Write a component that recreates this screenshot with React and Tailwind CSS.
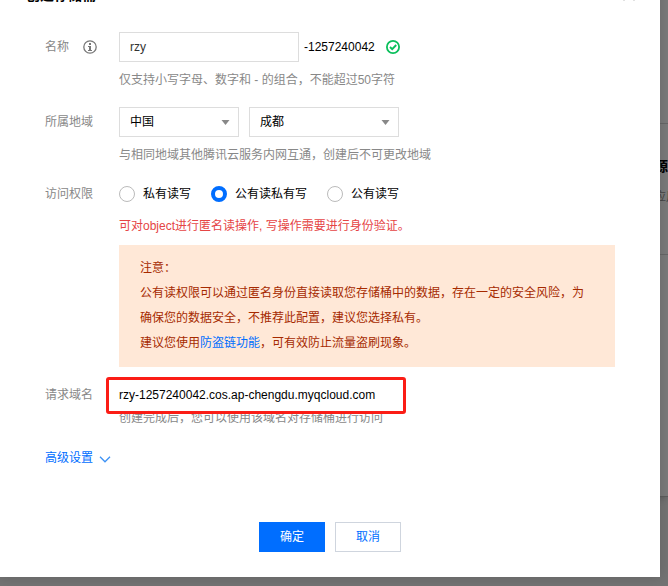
import React, { useState } from 'react';

const regionOptions = ['中国', '亚太', '欧洲', '北美'];
const cityOptions = ['成都', '北京', '上海', '广州'];

const permissions = [
  { value: 'private', label: '私有读写' },
  { value: 'public-read', label: '公有读私有写' },
  { value: 'public', label: '公有读写' },
];

const InfoIcon = () => (
  <svg className="w-3.5 h-3.5 shrink-0" viewBox="0 0 14 14" fill="none" aria-hidden="true">
    <circle cx="7" cy="7" r="6.2" stroke="#777" strokeWidth="1.3" />
    <rect x="6" y="3" width="2" height="2" fill="#777" />
    <path d="M5 6h3v4h1v1H5v-1h1V7H5z" fill="#777" />
  </svg>
);

const SuccessIcon = () => (
  <svg className="w-3.5 h-3.5 shrink-0" viewBox="0 0 14 14" fill="none" aria-hidden="true">
    <circle cx="7" cy="7" r="6.1" stroke="#0abf5b" strokeWidth="1.8" />
    <path d="M4 7l2.2 2.2L10.2 5" stroke="#0abf5b" strokeWidth="1.9" />
  </svg>
);

const FormRow = ({ label, htmlFor, icon, children }) => (
  <div className="flex">
    <div className="flex h-[30px] w-[74px] shrink-0 items-center gap-3.5 text-[#888]">
      <label htmlFor={htmlFor}>{label}</label>
      {icon}
    </div>
    <div className="min-w-0 flex-1">{children}</div>
  </div>
);

const SelectBox = ({ id, label, options, value, onChange, className }) => (
  <div className={`relative h-[30px] ${className}`}>
    <select
      id={id}
      aria-label={label}
      value={value}
      onChange={(e) => onChange(e.target.value)}
      className="h-full w-full appearance-none border border-[#ddd] bg-white px-2.5 text-black outline-none"
    >
      {options.map((option) => (
        <option key={option}>{option}</option>
      ))}
    </select>
    <svg className="pointer-events-none absolute right-[9px] top-[13px] h-[5px] w-[9px]" viewBox="0 0 9 5" aria-hidden="true">
      <path d="M0.5 0h8L4.5 5z" fill="#888" />
    </svg>
  </div>
);

const App = () => {
  const [name, setName] = useState('rzy');
  const [region, setRegion] = useState('中国');
  const [city, setCity] = useState('成都');
  const [permission, setPermission] = useState('public-read');

  return (
    <div className="relative min-h-screen overflow-hidden bg-[#737373] pr-2 pb-[9px] font-['Liberation_Sans','Noto_Sans_CJK_SC',sans-serif] text-xs leading-[18px]">
      {/* Dimmed page behind the dialog */}
      <div className="absolute right-0 top-0 h-[497px] w-3.5 overflow-hidden border-b border-[#5c5c5c] bg-[#7a7a7a] shadow-md">
        <div className="h-[124px] border-b border-[#666]" />
        <div className="h-[131px] whitespace-nowrap border-b border-[#666] pt-8">
          <p className="text-sm font-bold leading-5 text-black">源</p>
          <p className="mt-3 text-[#444]">应用</p>
        </div>
      </div>

      <div role="dialog" aria-labelledby="dialog-title" className="relative bg-white pb-[25px] shadow-[0_0_12px_rgba(0,0,0,0.15)]">
        <div className="-mt-[15px] flex h-5 items-center justify-between pl-[26px] pr-[25px]">
          <h3 id="dialog-title" className="text-sm font-bold leading-5 text-black">创建存储桶</h3>
          <button type="button" aria-label="关闭" className="h-3 w-3">
            <svg viewBox="0 0 12 12" fill="none" stroke="#888" aria-hidden="true">
              <path d="M1 0.5l10 11M11 0.5l-10 11" />
            </svg>
          </button>
        </div>

        <form className="px-[45px] pt-[27px]" onSubmit={(e) => e.preventDefault()}>
          <FormRow label="名称" htmlFor="bucket-name" icon={<InfoIcon />}>
            <div className="flex items-center">
              <input
                id="bucket-name"
                type="text"
                value={name}
                onChange={(e) => setName(e.target.value)}
                className="h-[30px] w-[180px] border border-[#ddd] bg-white px-2.5 text-[#333] outline-none"
              />
              <span className="ml-[5px] mr-[11px] text-black">-1257240042</span>
              <SuccessIcon />
            </div>
            <p className="mt-[9px] text-[#888]">仅支持小写字母、数字和 - 的组合，不能超过50字符</p>
          </FormRow>

          <div className="mt-[18px]">
            <FormRow label="所属地域" htmlFor="region">
              <div className="flex gap-2.5">
                <SelectBox id="region" label="所属地域" options={regionOptions} value={region} onChange={setRegion} className="w-[120px]" />
                <SelectBox id="city" label="城市" options={cityOptions} value={city} onChange={setCity} className="w-[150px]" />
              </div>
              <p className="mt-[9px] text-[#888]">与相同地域其他腾讯云服务内网互通，创建后不可更改地域</p>
            </FormRow>
          </div>

          <div className="mt-[15px]">
            <FormRow label="访问权限" htmlFor="private">
              <div className="flex h-[30px] items-center gap-5">
                {permissions.map((item) => (
                  <label key={item.value} className="flex items-center gap-2 text-black">
                    <input
                      id={item.value}
                      type="radio"
                      name="permission"
                      checked={permission === item.value}
                      onChange={() => setPermission(item.value)}
                      className="h-4 w-4 appearance-none rounded-full border border-[#bbb] bg-white checked:border-4 checked:border-[#006eff]"
                    />
                    {item.label}
                  </label>
                ))}
              </div>
              <p className="mt-2 text-[#e54545]">可对object进行匿名读操作, 写操作需要进行身份验证。</p>
              <div className="mt-2.5 bg-[#ffe8d7] px-[21px] py-[11px] leading-[25px] text-[#a62a00]">
                <p>注意：</p>
                <p>公有读权限可以通过匿名身份直接读取您存储桶中的数据，存在一定的安全风险，为确保您的数据安全，不推荐此配置，建议您选择私有。</p>
                <p>
                  建议您使用<a href="#referer" className="text-[#006eff]">防盗链功能</a>，可有效防止流量盗刷现象。
                </p>
              </div>
            </FormRow>
          </div>

          <div className="mt-[13px]">
            <FormRow label="请求域名" htmlFor="domain">
              <div className="relative flex h-[30px] items-center">
                <output id="domain" className="text-black">{name}-1257240042.cos.ap-chengdu.myqcloud.com</output>
                <div className="absolute -left-[13px] -top-[3px] z-10 h-[37px] w-[300px] rounded-[3px] border-3 border-[#fb1d16]" />
              </div>
              <p className="-mt-px text-[#888]">创建完成后，您可以使用该域名对存储桶进行访问</p>
            </FormRow>
          </div>

          <button type="button" className="mt-[22px] flex items-center gap-1.5 text-[#006eff]">
            高级设置
            <svg className="mt-0.5 h-[7px] w-3" viewBox="0 0 12 7" fill="none" aria-hidden="true">
              <path d="M1 0.8l5 5 5-5" stroke="#3d92f5" strokeWidth="1.3" />
            </svg>
          </button>

          <div className="mt-[55px] flex justify-center gap-2.5">
            <button type="submit" className="h-[30px] w-[66px] bg-[#006eff] text-white">确定</button>
            <button type="button" className="h-[30px] w-[66px] border border-[#cfd5de] bg-white text-[#006eff]">取消</button>
          </div>
        </form>
      </div>
    </div>
  );
};

export default App;
